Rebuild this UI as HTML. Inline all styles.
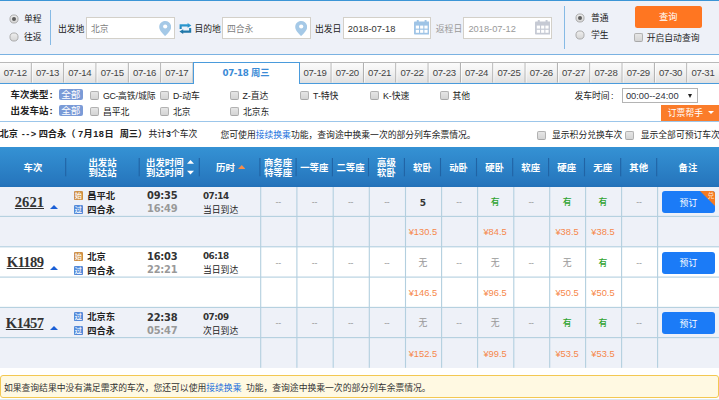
<!DOCTYPE html>
<html lang="zh-CN">
<head>
<meta charset="utf-8">
<title>车票查询</title>
<style>
*{box-sizing:border-box;margin:0;padding:0}
html,body{width:719px;height:400px;overflow:hidden;background:#fff}
body{font-family:"Liberation Sans","Noto Sans CJK SC",sans-serif;font-size:8.8px;color:#222;position:relative;line-height:1}
.abs{position:absolute;white-space:nowrap}
.t{position:absolute;white-space:nowrap;height:12px;line-height:12px}
b,.b{font-weight:bold}
/* top search panel */
#panel{position:absolute;left:-3px;top:0;width:730px;height:55px;background:#eef1f8;border-top:1.5px solid #3b95d6;border-bottom:1px solid #7ab2e2;border-left:1px solid #a9cdee;border-bottom-left-radius:4px}
.vsep{position:absolute;width:1px;background:#86bae5}
.radio{position:absolute;width:9.6px;height:9.6px;border-radius:50%;border:1px solid #9f9f9f;background:linear-gradient(#f1f1f1,#d2d2d2)}
.radio.on::after{content:"";position:absolute;left:1.9px;top:1.9px;width:3.8px;height:3.8px;border-radius:50%;background:#5a5a5a}
.cb{position:absolute;width:9.2px;height:9.2px;border-radius:2px;border:1px solid #b2b2b2;border-bottom-color:#a8a8a8;background:linear-gradient(#e6e6e6,#d4d4d4)}
.inp{position:absolute;top:17px;height:22px;width:88.5px;background:#fff;border:1px solid #d3d0c9}
.inp span{position:absolute;left:4px;top:4.6px;height:12px;line-height:12px;font-size:9.3px;color:#333}
.inp span.g2{font-size:8.8px;color:#808080;top:4.8px}
.inp.g span, .g{color:#999}
/* tabs */
#tabs{position:absolute;left:0;top:62px;width:719px;height:22px;border-bottom:1.5px solid #4a9bdc;border-top:1px solid #b9b9b9;background:linear-gradient(#fbfbfb,#f3f3f3 40%,#e0e0e0)}
.tab{position:absolute;top:0;height:20px;text-align:center;line-height:20.5px;font-size:9.6px;letter-spacing:-0.3px;color:#444}
.tab.sel{top:-1px;letter-spacing:0;height:22px;background:#fff;border:1px solid #4a9bdc;border-bottom:none;color:#3b8bd6;font-weight:bold;font-size:9.3px;line-height:21.5px;z-index:2}
.tab.sel i{font-style:normal;font-family:"DejaVu Sans","Liberation Sans",sans-serif;font-size:8.7px;letter-spacing:-0.4px}
.pill{position:absolute;left:58.7px;width:24.2px;height:11.5px;border-radius:2px;background:#7b9bd7;color:#fff;font-size:9.6px;line-height:11.5px;text-align:center}
/* table */
#thead{position:absolute;left:0;top:147px;width:719px;height:40px;background:linear-gradient(#3592d4,#2676bd 92%,#2270b8);color:#fff;font-weight:bold;font-size:9.4px}
#thead .h{position:absolute;text-align:center;line-height:10.4px;white-space:nowrap}
.row{position:absolute;left:0;width:719px}
.row.a{background:#eef1f8}
.c{position:absolute;width:36px;text-align:center;height:12px;line-height:12px;white-space:nowrap}
.no{color:#999}
.yes{color:#2fa32f;font-weight:500}
.pr{color:#f6874a;font-size:9.3px}
.tn{position:absolute;font-family:"Liberation Serif","Noto Serif CJK SC",serif;font-weight:bold;font-size:14.6px;color:#333;text-decoration:underline;height:16px;line-height:16px;text-align:right;width:50px}
.tri{position:absolute;width:0;height:0;border-left:4.2px solid transparent;border-right:4.2px solid transparent;border-bottom:4.2px solid #1a5fd6}
.ico{position:absolute;width:9.3px;height:9.2px;border-radius:1.6px;color:#fff;font-size:7.1px;font-weight:500;line-height:10.6px;text-align:center;letter-spacing:0;text-indent:0}
.ico.s{background:#d2934a;box-shadow:inset 0 0 0 0.6px #c98a3c}
.ico.p{background:#5a8fdc;box-shadow:inset 0 0 0 0.6px #4f84d4}
.st{position:absolute;font-weight:bold;font-size:9.3px;height:12px;line-height:12px;color:#222}
.tm{position:absolute;font-family:"DejaVu Sans","Liberation Sans",sans-serif;font-weight:bold;font-size:9.9px;letter-spacing:-0.2px;height:12px;line-height:12px;color:#333}
.tm.g{color:#999}
.tm.s{font-size:8.8px;letter-spacing:-0.5px}
.btn{position:absolute;left:662px;width:53.2px;height:22px;border-radius:3px;background:#1b7bf7;color:#fff;text-align:center;line-height:22px;font-size:8.8px;overflow:hidden}
</style>
</head>
<body>
<div id="panel"></div>
<svg class="abs" width="0" height="0" style="left:0;top:0"><defs><linearGradient id="rg" x1="0" y1="0" x2="0" y2="1"><stop offset="0" stop-color="#efefef"/><stop offset="1" stop-color="#d4d4d4"/></linearGradient></defs></svg>
<svg class="abs" style="left:8.7px;top:14.4px" width="10" height="10" viewBox="0 0 10 10"><circle cx="5" cy="5" r="4.05" fill="url(#rg)" stroke="#a6a6a6" stroke-width="0.9"/><circle cx="5" cy="5" r="2" fill="#5e5e5e"/></svg><div class="t" style="left:24px;top:13px">单程</div>
<svg class="abs" style="left:8.7px;top:32.3px" width="10" height="10" viewBox="0 0 10 10"><circle cx="5" cy="5" r="4.05" fill="url(#rg)" stroke="#a6a6a6" stroke-width="0.9"/></svg><div class="t" style="left:24px;top:31px">往返</div>
<div class="vsep" style="left:50px;top:9.5px;height:35px"></div>
<div class="t" style="left:58px;top:23px">出发地</div>
<div class="inp" style="left:86px"><span class="g2">北京</span></div>
<svg class="abs" style="left:158.6px;top:20.5px" width="12.4" height="15" viewBox="0 0 24 30"><path d="M12 0C5.4 0 0 5.3 0 11.8 0 20 12 30 12 30s12-10 12-18.2C24 5.3 18.6 0 12 0z" fill="#a5c9e7"/><circle cx="12" cy="11" r="4.2" fill="#fff"/></svg>
<svg class="abs" style="left:178.8px;top:22.8px" width="12.8" height="11" viewBox="0 0 128 110"><defs><linearGradient id="sg" x1="0" y1="0" x2="0" y2="1"><stop offset="0" stop-color="#2fa1da"/><stop offset="1" stop-color="#1b6c9c"/></linearGradient></defs><path fill="url(#sg)" d="M6 12H86V0L124 24 86 48V35H27V60H6ZM122 98H42V110L4 86 42 62V75H101V50H122Z"/></svg>
<div class="t" style="left:194.5px;top:23px">目的地</div>
<div class="inp" style="left:222px"><span class="g2">四合永</span></div>
<svg class="abs" style="left:294.8px;top:20.5px" width="12.4" height="15" viewBox="0 0 24 30"><path d="M12 0C5.4 0 0 5.3 0 11.8 0 20 12 30 12 30s12-10 12-18.2C24 5.3 18.6 0 12 0z" fill="#a5c9e7"/><circle cx="12" cy="11" r="4.2" fill="#fff"/></svg>
<div class="t" style="left:315px;top:23px">出发日</div>
<div class="inp" style="left:342.8px"><span>2018-07-18</span></div>
<svg class="abs" style="left:414px;top:20.4px" width="15.4" height="14.6" viewBox="0 0 154 146"><path fill="#9fc4e6" d="M0 22Q0 14 8 14H146Q154 14 154 22V138Q154 146 146 146H8Q0 146 0 138Z"/><rect x="28" y="0" width="20" height="30" rx="6" fill="#9fc4e6"/><rect x="106" y="0" width="20" height="30" rx="6" fill="#9fc4e6"/><g fill="#fff"><rect x="18" y="56" width="32" height="30"/><rect x="61" y="56" width="32" height="30"/><rect x="104" y="56" width="32" height="30"/><rect x="18" y="98" width="32" height="30"/><rect x="61" y="98" width="32" height="30"/><rect x="104" y="98" width="32" height="30"/></g></svg>
<div class="t g" style="left:435.8px;top:23px">返程日</div>
<div class="inp g" style="left:463.4px"><span>2018-07-12</span></div>
<svg class="abs" style="left:535px;top:20.4px" width="15.4" height="14.6" viewBox="0 0 154 146"><path fill="#c6cad4" d="M0 22Q0 14 8 14H146Q154 14 154 22V138Q154 146 146 146H8Q0 146 0 138Z"/><rect x="28" y="0" width="20" height="30" rx="6" fill="#c6cad4"/><rect x="106" y="0" width="20" height="30" rx="6" fill="#c6cad4"/><g fill="#fff"><rect x="18" y="56" width="32" height="30"/><rect x="61" y="56" width="32" height="30"/><rect x="104" y="56" width="32" height="30"/><rect x="18" y="98" width="32" height="30"/><rect x="61" y="98" width="32" height="30"/><rect x="104" y="98" width="32" height="30"/></g></svg>
<div class="vsep" style="left:564px;top:6px;height:42.5px"></div>
<svg class="abs" style="left:575.1px;top:12.5px" width="10" height="10" viewBox="0 0 10 10"><circle cx="5" cy="5" r="4.05" fill="url(#rg)" stroke="#a6a6a6" stroke-width="0.9"/><circle cx="5" cy="5" r="2" fill="#5e5e5e"/></svg><div class="t" style="left:591px;top:11.5px">普通</div>
<svg class="abs" style="left:575.1px;top:29.6px" width="10" height="10" viewBox="0 0 10 10"><circle cx="5" cy="5" r="4.05" fill="url(#rg)" stroke="#a6a6a6" stroke-width="0.9"/></svg><div class="t" style="left:591px;top:28.7px">学生</div>
<div class="abs" style="left:634.5px;top:6px;width:67.5px;height:22px;border-radius:2.5px;background:#ff7621;color:#fff;text-align:center;line-height:22px;font-size:9.2px">查询</div>
<div class="cb" style="left:634px;top:32.8px"></div><div class="t" style="left:646.7px;top:31.6px">开启自动查询</div>
<div id="tabs">
<div class="tab" style="left:-1.00px;width:32.34px">07-12</div>
<div class="tab" style="left:31.34px;width:32.34px">07-13</div>
<div class="tab" style="left:63.68px;width:32.34px">07-14</div>
<div class="tab" style="left:96.02px;width:32.34px">07-15</div>
<div class="tab" style="left:128.36px;width:32.34px">07-16</div>
<div class="tab" style="left:160.70px;width:32.34px">07-17</div>
<div class="tab" style="left:298.80px;width:32.33px">07-19</div>
<div class="tab" style="left:331.13px;width:32.33px">07-20</div>
<div class="tab" style="left:363.46px;width:32.33px">07-21</div>
<div class="tab" style="left:395.79px;width:32.33px">07-22</div>
<div class="tab" style="left:428.12px;width:32.33px">07-23</div>
<div class="tab" style="left:460.45px;width:32.33px">07-24</div>
<div class="tab" style="left:492.78px;width:32.33px">07-25</div>
<div class="tab" style="left:525.11px;width:32.33px">07-26</div>
<div class="tab" style="left:557.44px;width:32.33px">07-27</div>
<div class="tab" style="left:589.77px;width:32.33px">07-28</div>
<div class="tab" style="left:622.10px;width:32.33px">07-29</div>
<div class="tab" style="left:654.43px;width:32.33px">07-30</div>
<div class="tab" style="left:686.76px;width:32.33px">07-31</div>
<svg class="abs" style="left:0;top:0" width="719" height="20">
<rect x="30.84" y="0" width="1" height="19.5" fill="#adadad"/><rect x="31.84" y="0" width="1" height="19.5" fill="#fff" opacity="0.7"/>
<rect x="63.18" y="0" width="1" height="19.5" fill="#adadad"/><rect x="64.18" y="0" width="1" height="19.5" fill="#fff" opacity="0.7"/>
<rect x="95.52" y="0" width="1" height="19.5" fill="#adadad"/><rect x="96.52" y="0" width="1" height="19.5" fill="#fff" opacity="0.7"/>
<rect x="127.86" y="0" width="1" height="19.5" fill="#adadad"/><rect x="128.86" y="0" width="1" height="19.5" fill="#fff" opacity="0.7"/>
<rect x="160.20" y="0" width="1" height="19.5" fill="#adadad"/><rect x="161.20" y="0" width="1" height="19.5" fill="#fff" opacity="0.7"/>
<rect x="192.54" y="0" width="1" height="19.5" fill="#adadad"/><rect x="193.54" y="0" width="1" height="19.5" fill="#fff" opacity="0.7"/>
<rect x="330.63" y="0" width="1" height="19.5" fill="#adadad"/><rect x="331.63" y="0" width="1" height="19.5" fill="#fff" opacity="0.7"/>
<rect x="362.96" y="0" width="1" height="19.5" fill="#adadad"/><rect x="363.96" y="0" width="1" height="19.5" fill="#fff" opacity="0.7"/>
<rect x="395.29" y="0" width="1" height="19.5" fill="#adadad"/><rect x="396.29" y="0" width="1" height="19.5" fill="#fff" opacity="0.7"/>
<rect x="427.62" y="0" width="1" height="19.5" fill="#adadad"/><rect x="428.62" y="0" width="1" height="19.5" fill="#fff" opacity="0.7"/>
<rect x="459.95" y="0" width="1" height="19.5" fill="#adadad"/><rect x="460.95" y="0" width="1" height="19.5" fill="#fff" opacity="0.7"/>
<rect x="492.28" y="0" width="1" height="19.5" fill="#adadad"/><rect x="493.28" y="0" width="1" height="19.5" fill="#fff" opacity="0.7"/>
<rect x="524.61" y="0" width="1" height="19.5" fill="#adadad"/><rect x="525.61" y="0" width="1" height="19.5" fill="#fff" opacity="0.7"/>
<rect x="556.94" y="0" width="1" height="19.5" fill="#adadad"/><rect x="557.94" y="0" width="1" height="19.5" fill="#fff" opacity="0.7"/>
<rect x="589.27" y="0" width="1" height="19.5" fill="#adadad"/><rect x="590.27" y="0" width="1" height="19.5" fill="#fff" opacity="0.7"/>
<rect x="621.60" y="0" width="1" height="19.5" fill="#adadad"/><rect x="622.60" y="0" width="1" height="19.5" fill="#fff" opacity="0.7"/>
<rect x="653.93" y="0" width="1" height="19.5" fill="#adadad"/><rect x="654.93" y="0" width="1" height="19.5" fill="#fff" opacity="0.7"/>
<rect x="686.26" y="0" width="1" height="19.5" fill="#adadad"/><rect x="687.26" y="0" width="1" height="19.5" fill="#fff" opacity="0.7"/>
</svg>
<div class="tab sel" style="left:192.5px;width:107px"><i>07-18</i> 周三</div>
</div>
<div class="t b" style="left:10.6px;top:89px;font-size:9.45px">车次类型<span style="margin-left:1.2px">:</span></div>
<div class="pill" style="top:88.7px">全部</div>
<div class="cb" style="left:90.1px;top:90.6px"></div><div class="t" style="left:103px;top:89.7px"><span style="letter-spacing:-0.4px">GC-</span>高铁/城际</div>
<div class="cb" style="left:160.1px;top:90.6px"></div><div class="t" style="left:173px;top:89.7px">D-动车</div>
<div class="cb" style="left:230.0px;top:90.6px"></div><div class="t" style="left:242.5px;top:89.7px">Z-直达</div>
<div class="cb" style="left:299.5px;top:90.6px"></div><div class="t" style="left:313px;top:89.7px">T-特快</div>
<div class="cb" style="left:369.5px;top:90.6px"></div><div class="t" style="left:383px;top:89.7px">K-快速</div>
<div class="cb" style="left:440.0px;top:90.6px"></div><div class="t" style="left:452.5px;top:89.7px">其他</div>
<div class="t" style="left:574.4px;top:89.9px">发车时间<span style="margin-left:1.4px">:</span></div>
<div class="abs" style="left:622.4px;top:88.4px;width:75.3px;height:14.2px;border:1px solid #b4b4b4;background:#fff"><span class="abs" style="left:2.5px;top:0.5px;height:12px;line-height:12px;font-size:9.3px;color:#2f3340">00:00--24:00</span><span class="abs" style="left:65px;top:4.2px;width:0;height:0;border-left:2.5px solid transparent;border-right:2.5px solid transparent;border-top:4.6px solid #222"></span></div>
<div class="t b" style="left:10.6px;top:105.2px;font-size:9.45px">出发车站<span style="margin-left:1.2px">:</span></div>
<div class="pill" style="top:104.8px">全部</div>
<div class="cb" style="left:90.1px;top:106.6px"></div><div class="t" style="left:103px;top:105.7px">昌平北</div>
<div class="cb" style="left:160.1px;top:106.6px"></div><div class="t" style="left:173px;top:105.7px">北京</div>
<div class="cb" style="left:230.0px;top:106.6px"></div><div class="t" style="left:243px;top:105.7px">北京东</div>
<div class="abs" style="left:660.8px;top:104.8px;width:60px;height:16.3px;background:#fb7c2a;color:#fff;font-size:8.7px;line-height:16.5px;padding-left:7px;font-size:8.8px">订票帮手<span class="abs" style="left:47.4px;top:6.6px;width:0;height:0;border-left:3.4px solid transparent;border-right:3.4px solid transparent;border-top:3.8px solid #fff"></span></div>
<div class="abs" style="left:0;top:120.5px;width:719px;height:1px;background:#9cc6ea"></div>
<div class="t" style="left:-0.5px;top:128.3px"><b style="font-size:9.2px"><span class="abs" style="left:0">北京</span><span class="abs" style="left:22.3px;letter-spacing:1.4px">--&gt;</span><span class="abs" style="left:39.2px">四合永（</span><span class="abs" style="left:78.4px;letter-spacing:0.5px">7月18日</span><span class="abs" style="left:120.2px">周三）</span></b><span class="abs" style="left:149px">共计<b>3</b>个车次</span></div>
<div class="t" style="left:220.5px;top:128.5px">您可使用<span style="color:#1a6fdc">接续换乘</span>功能，查询途中换乘一次的部分列车余票情况。</div>
<div class="cb" style="left:536.6px;top:130.6px"></div><div class="t" style="left:552px;top:128.8px">显示积分兑换车次</div>
<div class="cb" style="left:625.2px;top:130.6px"></div><div class="t" style="left:640.7px;top:128.8px">显示全部可预订车次</div>
<div id="thead">
<div class="h" style="left:0px;width:66px;top:15.6px">车次</div>
<div class="h" style="left:66px;width:73px;top:10.5px">出发站<br>到达站</div>
<div class="h" style="left:146px;top:10.5px;text-align:left">出发时间<br>到达时间</div>
<svg class="abs" style="left:187px;top:13px" width="7" height="15" viewBox="0 0 70 150"><path fill="#fff" d="M0 38L35 0 70 38ZM0 108H70L35 146Z"/></svg>
<div class="h" style="left:216px;top:15.6px;text-align:left">历时</div>
<svg class="abs" style="left:237.5px;top:18px" width="7.5" height="4" viewBox="0 0 75 40"><path fill="#f58d4c" d="M0 40L37.5 0 75 40Z"/></svg>
<div class="h" style="left:260px;width:36px;top:10.5px">商务座<br>特等座</div>
<div class="h" style="left:296px;width:36.5px;top:15.6px">一等座</div>
<div class="h" style="left:332.5px;width:36.0px;top:15.6px">二等座</div>
<div class="h" style="left:368.5px;width:36.0px;top:10.5px">高级<br>软卧</div>
<div class="h" style="left:404.5px;width:36.0px;top:15.6px">软卧</div>
<div class="h" style="left:440.5px;width:36.10000000000002px;top:15.6px">动卧</div>
<div class="h" style="left:476.6px;width:36.10000000000002px;top:15.6px">硬卧</div>
<div class="h" style="left:512.7px;width:36.0px;top:15.6px">软座</div>
<div class="h" style="left:548.7px;width:35.89999999999998px;top:15.6px">硬座</div>
<div class="h" style="left:584.6px;width:36.10000000000002px;top:15.6px">无座</div>
<div class="h" style="left:620.7px;width:36.09999999999991px;top:15.6px">其他</div>
<div class="h" style="left:656.8px;width:62.200000000000045px;top:15.6px">备注</div>
<svg class="abs" style="left:0;top:0" width="719" height="39">
<rect x="65.15" y="11" width="1.1" height="18.3" fill="#2163a4"/>
<rect x="138.65" y="11" width="1.1" height="18.3" fill="#2163a4"/>
<rect x="198.75" y="11" width="1.1" height="18.3" fill="#2163a4"/>
<rect x="259.35" y="11" width="1.1" height="18.3" fill="#2163a4"/>
<rect x="295.55" y="11" width="1.1" height="18.3" fill="#2163a4"/>
<rect x="331.85" y="11" width="1.1" height="18.3" fill="#2163a4"/>
<rect x="367.95" y="11" width="1.1" height="18.3" fill="#2163a4"/>
<rect x="403.85" y="11" width="1.1" height="18.3" fill="#2163a4"/>
<rect x="439.95" y="11" width="1.1" height="18.3" fill="#2163a4"/>
<rect x="475.95" y="11" width="1.1" height="18.3" fill="#2163a4"/>
<rect x="512.15" y="11" width="1.1" height="18.3" fill="#2163a4"/>
<rect x="548.05" y="11" width="1.1" height="18.3" fill="#2163a4"/>
<rect x="583.95" y="11" width="1.1" height="18.3" fill="#2163a4"/>
<rect x="620.15" y="11" width="1.1" height="18.3" fill="#2163a4"/>
<rect x="656.15" y="11" width="1.1" height="18.3" fill="#2163a4"/>
</svg>
</div>
<div class="row a" style="top:187.0px;height:59.8px"></div>
<div class="row " style="top:246.8px;height:60.6px"></div>
<div class="row a" style="top:307.4px;height:60.4px"></div>
<svg class="abs" style="left:0;top:0" width="719" height="400">
<rect x="260.15" y="187" width="1.1" height="180.8" fill="#b3cfdf"/>
<rect x="296.35" y="187" width="1.1" height="180.8" fill="#b3cfdf"/>
<rect x="332.65" y="187" width="1.1" height="180.8" fill="#b3cfdf"/>
<rect x="368.75" y="187" width="1.1" height="180.8" fill="#b3cfdf"/>
<rect x="404.95" y="187" width="1.1" height="180.8" fill="#b3cfdf"/>
<rect x="441.05" y="187" width="1.1" height="180.8" fill="#b3cfdf"/>
<rect x="477.05" y="187" width="1.1" height="180.8" fill="#b3cfdf"/>
<rect x="513.25" y="187" width="1.1" height="180.8" fill="#b3cfdf"/>
<rect x="549.15" y="187" width="1.1" height="180.8" fill="#b3cfdf"/>
<rect x="585.05" y="187" width="1.1" height="180.8" fill="#b3cfdf"/>
<rect x="621.05" y="187" width="1.1" height="180.8" fill="#b3cfdf"/>
<rect x="657.05" y="187" width="1.1" height="180.8" fill="#b3cfdf"/>
<rect x="0" y="215.85" width="719" height="1.1" fill="#b3cfdf"/>
<rect x="0" y="246.25" width="719" height="1.1" fill="#b3cfdf"/>
<rect x="0" y="276.55" width="719" height="1.1" fill="#b3cfdf"/>
<rect x="0" y="306.85" width="719" height="1.1" fill="#b3cfdf"/>
<rect x="0" y="337.05" width="719" height="1.1" fill="#b3cfdf"/>
</svg>
<div class="tn" style="left:-6px;top:193.7px;">2621</div>
<div class="tri" style="left:49.6px;top:205.2px"></div>
<div class="ico s" style="left:73.7px;top:191.0px">始</div>
<div class="st" style="left:87.2px;top:189.9px">昌平北</div>
<div class="ico p" style="left:73.7px;top:205.0px">过</div>
<div class="st" style="left:87.2px;top:204.1px">四合永</div>
<div class="tm" style="left:147px;top:190.3px">09:35</div>
<div class="tm g" style="left:147px;top:203.3px">16:49</div>
<div class="tm s" style="left:203px;top:189.6px;color:#333">07:14</div>
<div class="t" style="left:203px;top:203.5px">当日到达</div>
<div class="c no" style="left:260.2px;top:196.0px;letter-spacing:-0.3px;">--</div>
<div class="c no" style="left:296.4px;top:196.0px;letter-spacing:-0.3px;">--</div>
<div class="c no" style="left:332.6px;top:196.0px;letter-spacing:-0.3px;">--</div>
<div class="c no" style="left:368.8px;top:196.0px;letter-spacing:-0.3px;">--</div>
<div class="c " style="left:404.9px;top:196.0px;font-weight:bold;font-size:9.1px;color:#333;margin-top:1.2px;font-family:'DejaVu Sans','Liberation Sans',sans-serif;">5</div>
<div class="c pr" style="left:404.9px;top:226.3px">¥130.5</div>
<div class="c no" style="left:441.0px;top:196.0px;letter-spacing:-0.3px;">--</div>
<div class="c yes" style="left:477.1px;top:196.0px;">有</div>
<div class="c pr" style="left:477.1px;top:226.3px">¥84.5</div>
<div class="c no" style="left:513.1px;top:196.0px;letter-spacing:-0.3px;">--</div>
<div class="c yes" style="left:549.1px;top:196.0px;">有</div>
<div class="c pr" style="left:549.1px;top:226.3px">¥38.5</div>
<div class="c yes" style="left:585.0px;top:196.0px;">有</div>
<div class="c pr" style="left:585.0px;top:226.3px">¥38.5</div>
<div class="c no" style="left:621.0px;top:196.0px;letter-spacing:-0.3px;">--</div>
<div class="btn" style="top:191.0px"><span style="position:relative;left:-0.2px;top:0.8px">预订</span><span class="abs" style="right:0;top:0;width:0;height:0;border-left:15.6px solid transparent;border-top:15.8px solid #f47a20"></span><span class="abs" style="right:0.8px;top:1px;font-size:6.8px;line-height:7px;color:#ffe3cc">兑</span></div>
<div class="tn" style="left:-6px;top:254.3px;letter-spacing:-0.6px;width:49.4px">K1189</div>
<div class="tri" style="left:49.6px;top:265.8px"></div>
<div class="ico s" style="left:73.7px;top:251.6px">始</div>
<div class="st" style="left:87.2px;top:250.5px">北京</div>
<div class="ico p" style="left:73.7px;top:265.6px">过</div>
<div class="st" style="left:87.2px;top:264.7px">四合永</div>
<div class="tm" style="left:147px;top:250.9px">16:03</div>
<div class="tm g" style="left:147px;top:263.9px">22:21</div>
<div class="tm s" style="left:203px;top:250.2px;color:#333">06:18</div>
<div class="t" style="left:203px;top:264.1px">当日到达</div>
<div class="c no" style="left:260.2px;top:256.6px;letter-spacing:-0.3px;">--</div>
<div class="c no" style="left:296.4px;top:256.6px;letter-spacing:-0.3px;">--</div>
<div class="c no" style="left:332.6px;top:256.6px;letter-spacing:-0.3px;">--</div>
<div class="c no" style="left:368.8px;top:256.6px;letter-spacing:-0.3px;">--</div>
<div class="c no" style="left:404.9px;top:256.6px;">无</div>
<div class="c pr" style="left:404.9px;top:286.9px">¥146.5</div>
<div class="c no" style="left:441.0px;top:256.6px;letter-spacing:-0.3px;">--</div>
<div class="c no" style="left:477.1px;top:256.6px;">无</div>
<div class="c pr" style="left:477.1px;top:286.9px">¥96.5</div>
<div class="c no" style="left:513.1px;top:256.6px;letter-spacing:-0.3px;">--</div>
<div class="c no" style="left:549.1px;top:256.6px;">无</div>
<div class="c pr" style="left:549.1px;top:286.9px">¥50.5</div>
<div class="c yes" style="left:585.0px;top:256.6px;">有</div>
<div class="c pr" style="left:585.0px;top:286.9px">¥50.5</div>
<div class="c no" style="left:621.0px;top:256.6px;letter-spacing:-0.3px;">--</div>
<div class="btn" style="top:251.6px"><span style="position:relative;left:-0.2px;top:0.8px">预订</span></div>
<div class="tn" style="left:-6px;top:314.9px;letter-spacing:-0.6px;width:49.4px">K1457</div>
<div class="tri" style="left:49.6px;top:326.4px"></div>
<div class="ico p" style="left:73.7px;top:312.2px">过</div>
<div class="st" style="left:87.2px;top:311.1px">北京东</div>
<div class="ico p" style="left:73.7px;top:326.2px">过</div>
<div class="st" style="left:87.2px;top:325.3px">四合永</div>
<div class="tm" style="left:147px;top:311.5px">22:38</div>
<div class="tm g" style="left:147px;top:324.5px">05:47</div>
<div class="tm s" style="left:203px;top:310.8px;color:#333">07:09</div>
<div class="t" style="left:203px;top:324.7px">次日到达</div>
<div class="c no" style="left:260.2px;top:317.2px;letter-spacing:-0.3px;">--</div>
<div class="c no" style="left:296.4px;top:317.2px;letter-spacing:-0.3px;">--</div>
<div class="c no" style="left:332.6px;top:317.2px;letter-spacing:-0.3px;">--</div>
<div class="c no" style="left:368.8px;top:317.2px;letter-spacing:-0.3px;">--</div>
<div class="c no" style="left:404.9px;top:317.2px;">无</div>
<div class="c pr" style="left:404.9px;top:347.5px">¥152.5</div>
<div class="c no" style="left:441.0px;top:317.2px;letter-spacing:-0.3px;">--</div>
<div class="c no" style="left:477.1px;top:317.2px;">无</div>
<div class="c pr" style="left:477.1px;top:347.5px">¥99.5</div>
<div class="c no" style="left:513.1px;top:317.2px;letter-spacing:-0.3px;">--</div>
<div class="c yes" style="left:549.1px;top:317.2px;">有</div>
<div class="c pr" style="left:549.1px;top:347.5px">¥53.5</div>
<div class="c yes" style="left:585.0px;top:317.2px;">有</div>
<div class="c pr" style="left:585.0px;top:347.5px">¥53.5</div>
<div class="c no" style="left:621.0px;top:317.2px;letter-spacing:-0.3px;">--</div>
<div class="btn" style="top:312.2px"><span style="position:relative;left:-0.2px;top:0.8px">预订</span></div>
<div class="abs" style="left:0;top:398.7px;width:719px;height:1.3px;background:#d9e6ee"></div>
<div class="abs" style="left:0;top:375px;width:719px;height:23.3px;border:1px solid #f3c852;border-radius:3px;background:#fff9e2"><div class="t" style="left:2.9px;top:6px;color:#333;word-spacing:2px">如果查询结果中没有满足需求的车次，您还可以使用<span style="color:#1a6fdc">接续换乘</span> 功能，查询途中换乘一次的部分列车余票情况。</div></div>
</body>
</html>
